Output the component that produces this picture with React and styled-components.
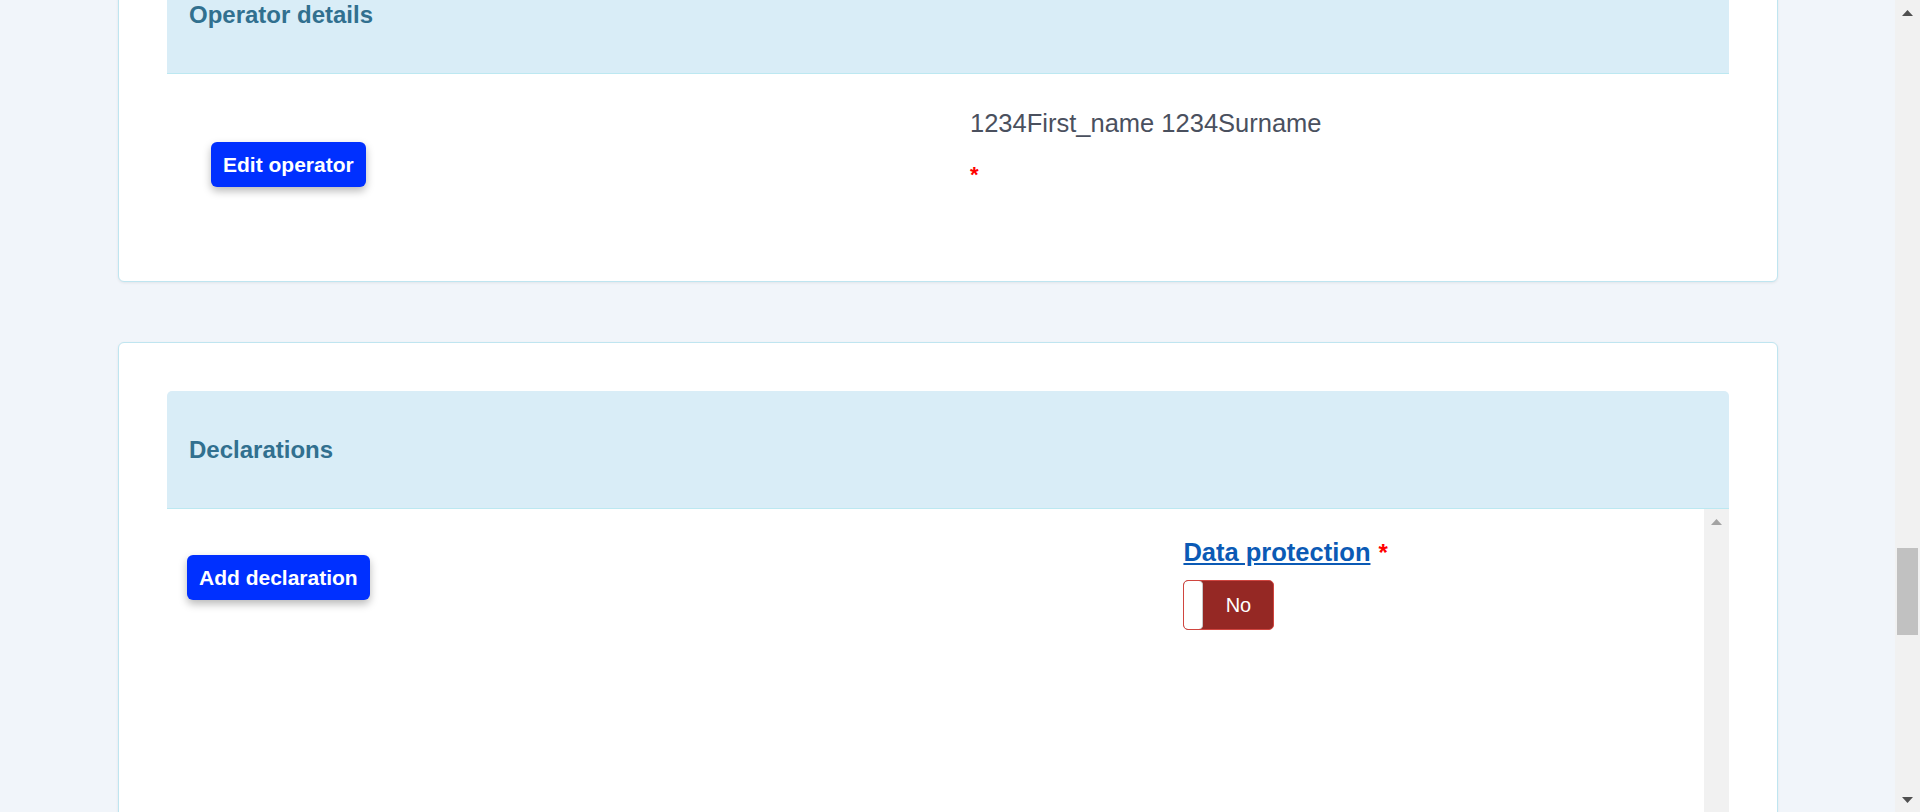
import React from "react";
import styled, { createGlobalStyle } from "styled-components";

const GlobalStyle = createGlobalStyle`
  html,
  body {
    margin: 0;
    height: 100%;
    overflow: hidden;
  }

  body {
    font-family: "Liberation Sans", Arial, sans-serif;
    background: #f1f5fa;
  }
`;

const App = () => {
  return (
    <Page>
      <GlobalStyle />
      <Viewport>
        <Content>
          <Card>
            <PanelHeading>Operator details</PanelHeading>
            <OperatorBody>
              <ActionCell $top={68} $left={44}>
                <PrimaryButton type="button">Edit operator</PrimaryButton>
              </ActionCell>
              <DetailCell $top={31}>
                <OperatorName>1234First_name 1234Surname</OperatorName>
                <Required $size={22}>*</Required>
              </DetailCell>
            </OperatorBody>
          </Card>

          <Card>
            <PanelHeading $rounded>Declarations</PanelHeading>
            <ScrollBody>
              <DeclarationGrid>
                <ActionCell $top={46} $left={20}>
                  <PrimaryButton type="button">Add declaration</PrimaryButton>
                </ActionCell>
                <DetailCell $top={26}>
                  <FieldLabel>
                    <DocLink href="#">Data protection</DocLink>
                    <Required $size={24}>*</Required>
                  </FieldLabel>
                  <Toggle aria-pressed="false" type="button">
                    <Knob />
                    <ToggleText>No</ToggleText>
                  </Toggle>
                </DetailCell>
              </DeclarationGrid>
              <InnerScrollbar>
                <ArrowButton>
                  <Arrow color="#a3a3a3" />
                </ArrowButton>
              </InnerScrollbar>
            </ScrollBody>
          </Card>
        </Content>
      </Viewport>

      <PageScrollbar>
        <ArrowButton>
          <Arrow color="#505050" />
        </ArrowButton>
        <Track>
          <Thumb />
        </Track>
        <ArrowButton>
          <Arrow color="#505050" down />
        </ArrowButton>
      </PageScrollbar>
    </Page>
  );
};

const Arrow = ({ color, down }) => (
  <svg width="11" height="6" viewBox="0 0 11 6">
    <polygon
      points={down ? "0,0 11,0 5.5,6" : "5.5,0 11,6 0,6"}
      fill={color}
    />
  </svg>
);

const Page = styled.div`
  display: flex;
  height: 100vh;
  background: #f1f5fa;
`;

const Viewport = styled.main`
  flex: 1;
  min-width: 0;
  overflow: hidden;
`;

/* the page is scrolled down, so the first card starts above the window */
const Content = styled.div`
  display: flex;
  flex-direction: column;
  gap: 60px;
  margin-top: -93px;
  padding: 0 117px 0 118px;
`;

const Card = styled.section`
  background: #fff;
  border: 1px solid #bfe5f0;
  border-radius: 6px;
  padding: 48px;
  box-shadow: 0 1px 3px rgba(0, 0, 0, 0.07);
`;

const PanelHeading = styled.h3`
  margin: 0;
  padding: 46px 22px 45px;
  background: #d9edf7;
  border-bottom: 1px solid #bce8f1;
  border-radius: ${({ $rounded }) => ($rounded ? "5px 5px 0 0" : "0")};
  color: #31708f;
  font-size: 24px;
  font-weight: 700;
  line-height: 26px;
`;

const OperatorBody = styled.div`
  display: grid;
  grid-template-columns: 1fr 1fr;
  height: 159px;
`;

const ScrollBody = styled.div`
  display: flex;
  min-height: 420px;
`;

const DeclarationGrid = styled.div`
  flex: 1;
  display: grid;
  grid-template-columns: 64.7% 1fr;
  align-content: start;
`;

const ActionCell = styled.div`
  padding-top: ${({ $top }) => $top}px;
  padding-left: ${({ $left }) => $left}px;
`;

const DetailCell = styled.div`
  display: flex;
  flex-direction: column;
  align-items: flex-start;
  padding-top: ${({ $top }) => $top}px;
  padding-left: 22px;
`;

const PrimaryButton = styled.button`
  height: 45px;
  padding: 0 12px;
  border: none;
  border-radius: 6px;
  background: #0030ff;
  color: #fff;
  font-family: "Liberation Sans", Arial, sans-serif;
  font-size: 21px;
  font-weight: 700;
  box-shadow: 0 4px 8px rgba(0, 0, 0, 0.28);
  cursor: pointer;
`;

const OperatorName = styled.p`
  margin: 0 0 19px;
  color: #4a505e;
  font-size: 25.5px;
  line-height: 36px;
`;

const Required = styled.span`
  color: #ff0000;
  font-size: ${({ $size }) => $size}px;
  font-weight: 700;
  line-height: 30px;
`;

const FieldLabel = styled.div`
  display: flex;
  align-items: baseline;
  gap: 8px;
  font-size: 25.5px;
  line-height: 35px;
`;

const DocLink = styled.a`
  color: #0b5ab5;
  font-weight: 700;
  text-decoration: underline;
  text-underline-offset: 2px;
`;

const Toggle = styled.button`
  display: flex;
  width: 91px;
  height: 50px;
  margin-top: 10px;
  padding: 0;
  border: 1px solid #d0453f;
  border-radius: 5px;
  background: #952824;
  overflow: hidden;
  cursor: pointer;
`;

const Knob = styled.span`
  width: 18px;
  height: 100%;
  background: #fff;
  border-right: 1px solid #c8c8c8;
  border-radius: 4px;
`;

const ToggleText = styled.span`
  flex: 1;
  align-self: center;
  color: #fff;
  font-family: "Liberation Sans", Arial, sans-serif;
  font-size: 20px;
  text-align: center;
`;

const InnerScrollbar = styled.div`
  width: 25px;
  background: #f1f1f1;
`;

const PageScrollbar = styled.div`
  display: flex;
  flex-direction: column;
  width: 25px;
  background: #f1f1f1;
`;

const ArrowButton = styled.div`
  display: flex;
  align-items: center;
  justify-content: center;
  height: 25px;
  flex-shrink: 0;
`;

const Track = styled.div`
  flex: 1;
  padding: 0 2px;
`;

const Thumb = styled.div`
  height: 87px;
  margin-top: 523px;
  background: #c1c1c1;
`;

export default App;
